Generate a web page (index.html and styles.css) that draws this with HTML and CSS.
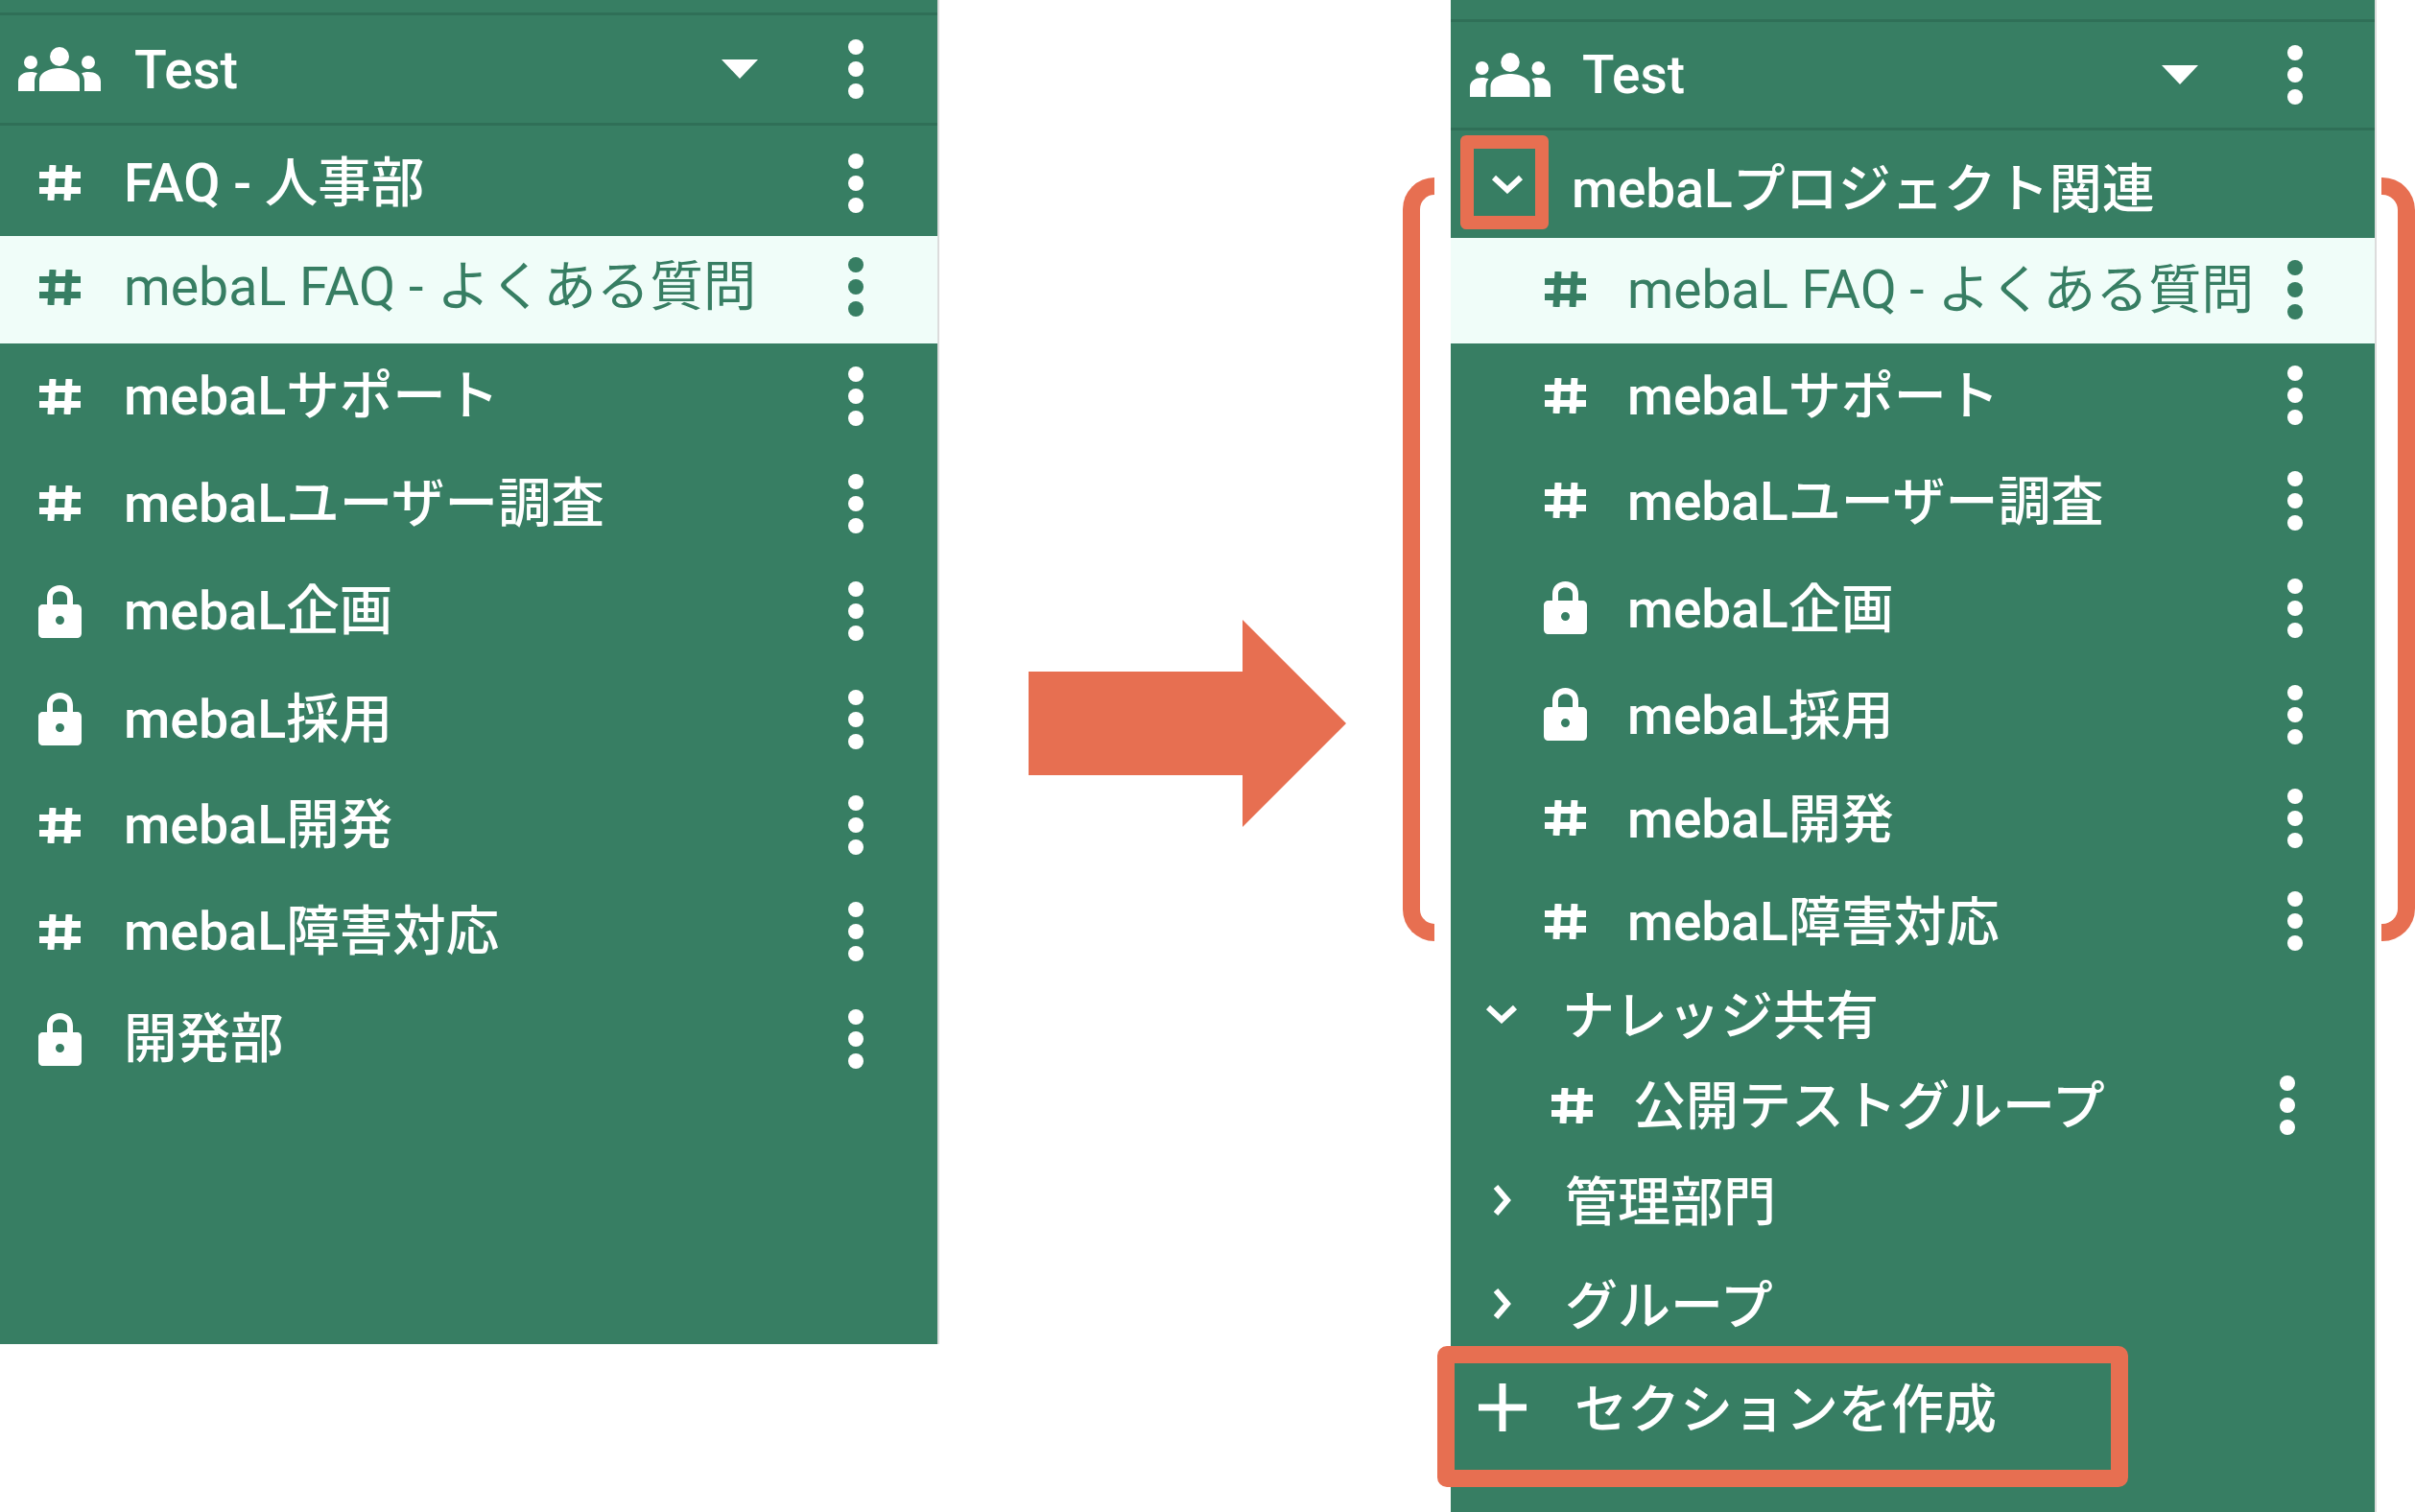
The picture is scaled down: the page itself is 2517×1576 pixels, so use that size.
FILE: index.html
```html
<!DOCTYPE html>
<html lang="ja">
<head>
<meta charset="utf-8">
<title>mebaL sections</title>
<link rel="stylesheet" href="styles.css">
</head>
<body>
<svg class="sprite" aria-hidden="true">
  <symbol id="hash" viewBox="0 0 45 37"><path d="M15 0 13 37M32 0 30 37M1 10.500H44M1 26.500H44" fill="none" stroke="currentColor" stroke-width="7"/></symbol>
  <symbol id="lock" viewBox="0 0 45 55" preserveAspectRatio="none"><path fill="currentColor" fill-rule="evenodd" d="M9 20V13C9 5 15 0 22.500 0S36 5 36 13V20H40C43 20 45 22 45 25V50C45 53 43 55 40 55H5C2 55 0 53 0 50V25C0 22 2 20 5 20zM15 20H30V13C30 9 27 6.500 22.500 6.500S15 9 15 13zM22.500 32A4.500 4.500 0 1 0 22.500 41 4.500 4.500 0 1 0 22.500 32z"/></symbol>
  <symbol id="kebab" viewBox="0 0 18 62"><ellipse cx="9" cy="8" rx="8" ry="8" fill="currentColor"/><ellipse cx="9" cy="31" rx="8" ry="8" fill="currentColor"/><ellipse cx="9" cy="54" rx="8" ry="8" fill="currentColor"/></symbol>
  <symbol id="group" viewBox="0 0 86 46" preserveAspectRatio="none"><g fill="currentColor"><circle cx="43" cy="10" r="10"/><path d="M22 46V35c0-9 11-13 21-13s21 4 21 13v11z"/><circle cx="13" cy="16" r="7"/><circle cx="73" cy="16" r="7"/><path d="M0 46V36c0-7 6-10 13-10 3 0 5 .5 7 1.500-2 2-3 5-3 8v10.500zM86 46V36c0-7-6-10-13-10-3 0-5 .5-7 1.500 2 2 3 5 3 8v10.500z"/></g></symbol>
  <symbol id="caret" viewBox="0 0 38 20" preserveAspectRatio="none"><path fill="currentColor" d="M0 0H38L19 20z"/></symbol>
  <symbol id="down" viewBox="0 0 34 20" preserveAspectRatio="none"><path d="M3 3 17 16 31 3" fill="none" stroke="currentColor" stroke-width="6"/></symbol>
  <symbol id="right" viewBox="0 0 20 34" preserveAspectRatio="none"><path d="M4 3 16 17 4 31" fill="none" stroke="currentColor" stroke-width="6"/></symbol>
  <symbol id="plus" viewBox="0 0 50 50"><path d="M25 0V50M0 25H50" fill="none" stroke="currentColor" stroke-width="7"/></symbol>
</svg>

<main class="canvas">
  <section class="panel panel-before">
    <header class="workspace">
      <svg class="ico-group"><use href="#group"/></svg>
      <span class="ws-name">Test</span>
      <svg class="ico-caret"><use href="#caret"/></svg>
      <svg class="ico-kebab"><use href="#kebab"/></svg>
    </header>
    <ul class="channels">
      <li class="channel"><svg class="ico"><use href="#hash"/></svg><span class="label">FAQ - 人事部</span><svg class="ico-kebab"><use href="#kebab"/></svg></li>
      <li class="channel active"><svg class="ico"><use href="#hash"/></svg><span class="label">mebaL FAQ - よくある質問</span><svg class="ico-kebab"><use href="#kebab"/></svg></li>
      <li class="channel"><svg class="ico"><use href="#hash"/></svg><span class="label">mebaLサポート</span><svg class="ico-kebab"><use href="#kebab"/></svg></li>
      <li class="channel"><svg class="ico"><use href="#hash"/></svg><span class="label">mebaLユーザー調査</span><svg class="ico-kebab"><use href="#kebab"/></svg></li>
      <li class="channel"><svg class="ico ico-lock"><use href="#lock"/></svg><span class="label">mebaL企画</span><svg class="ico-kebab"><use href="#kebab"/></svg></li>
      <li class="channel"><svg class="ico ico-lock"><use href="#lock"/></svg><span class="label">mebaL採用</span><svg class="ico-kebab"><use href="#kebab"/></svg></li>
      <li class="channel"><svg class="ico"><use href="#hash"/></svg><span class="label">mebaL開発</span><svg class="ico-kebab"><use href="#kebab"/></svg></li>
      <li class="channel"><svg class="ico"><use href="#hash"/></svg><span class="label">mebaL障害対応</span><svg class="ico-kebab"><use href="#kebab"/></svg></li>
      <li class="channel"><svg class="ico ico-lock"><use href="#lock"/></svg><span class="label">開発部</span><svg class="ico-kebab"><use href="#kebab"/></svg></li>
    </ul>
  </section>

  <svg class="arrow" viewBox="0 0 331 216" aria-hidden="true"><path d="M0 54H223V0L331 108 223 216V162H0z"/></svg>

  <section class="panel panel-after">
    <header class="workspace">
      <svg class="ico-group"><use href="#group"/></svg>
      <span class="ws-name">Test</span>
      <svg class="ico-caret"><use href="#caret"/></svg>
      <svg class="ico-kebab"><use href="#kebab"/></svg>
    </header>
    <ul class="channels">
      <li class="section first"><svg class="ico-down"><use href="#down"/></svg><span class="label">mebaLプロジェクト関連</span></li>
      <li class="channel active"><svg class="ico"><use href="#hash"/></svg><span class="label">mebaL FAQ - よくある質問</span><svg class="ico-kebab"><use href="#kebab"/></svg></li>
      <li class="channel"><svg class="ico"><use href="#hash"/></svg><span class="label">mebaLサポート</span><svg class="ico-kebab"><use href="#kebab"/></svg></li>
      <li class="channel"><svg class="ico"><use href="#hash"/></svg><span class="label">mebaLユーザー調査</span><svg class="ico-kebab"><use href="#kebab"/></svg></li>
      <li class="channel"><svg class="ico ico-lock"><use href="#lock"/></svg><span class="label">mebaL企画</span><svg class="ico-kebab"><use href="#kebab"/></svg></li>
      <li class="channel"><svg class="ico ico-lock"><use href="#lock"/></svg><span class="label">mebaL採用</span><svg class="ico-kebab"><use href="#kebab"/></svg></li>
      <li class="channel"><svg class="ico"><use href="#hash"/></svg><span class="label">mebaL開発</span><svg class="ico-kebab"><use href="#kebab"/></svg></li>
      <li class="channel"><svg class="ico"><use href="#hash"/></svg><span class="label">mebaL障害対応</span><svg class="ico-kebab"><use href="#kebab"/></svg></li>
      <li class="section"><svg class="ico-down"><use href="#down"/></svg><span class="label">ナレッジ共有</span></li>
      <li class="channel public"><svg class="ico"><use href="#hash"/></svg><span class="label">公開テストグループ</span><svg class="ico-kebab"><use href="#kebab"/></svg></li>
      <li class="section"><svg class="ico-right"><use href="#right"/></svg><span class="label">管理部門</span></li>
      <li class="section"><svg class="ico-right"><use href="#right"/></svg><span class="label">グループ</span></li>
      <li class="section create"><svg class="ico-plus"><use href="#plus"/></svg><span class="label">セクションを作成</span></li>
    </ul>
    <div class="mark mark-chevron"></div>
    <div class="mark bracket-left"></div>
    <div class="mark bracket-right"></div>
    <div class="mark mark-create"></div>
  </section>
</main>
</body>
</html>
```

FILE: styles.css
```css
* { box-sizing: border-box; }

html, body {
  margin: 0;
  padding: 0;
  background: #fff;
}

body {
  width: 2517px;
  height: 1576px;
  overflow: hidden;
  font-family: Roboto, "Noto Sans CJK JP", sans-serif;
  font-size: 55.5px;
  font-weight: 500;
  color: #fff;
}

.sprite { display: none; }

.canvas {
  display: flex;
  align-items: flex-start;
}

.panel {
  flex: none;
  background: #377e63;
  border-right: 2px solid #dcdcdc;
}

.panel-before {
  width: 979px;
  height: 1401px;
  padding-top: 13px;
}

.panel-after {
  position: relative;
  width: 965px;
  height: 1576px;
  margin-left: 109px;
  padding-top: 20px;
  font-size: 55px;
}

.arrow {
  flex: none;
  width: 331px;
  height: 216px;
  margin: 646px 0 0 93px;
  fill: #e76f51;
}

.workspace {
  display: flex;
  align-items: center;
  height: 118px;
  border-top: 3px solid #2f6f57;
  border-bottom: 3px solid #2f6f57;
}

.ico-group { flex: none; width: 86px; height: 46px; margin-left: 19px; }
.ws-name { margin-left: 35px; margin-top: 2px; }
.ico-caret { flex: none; width: 38px; height: 20px; margin-left: auto; margin-right: 93px; }

.ico-kebab {
  flex: none;
  width: 18px;
  height: 62px;
  margin-right: 76px;
}

.channels {
  margin: 0;
  padding: 0;
  list-style: none;
}

.channel, .section {
  display: flex;
  align-items: center;
}

.channel .ico-kebab { margin-left: auto; }

.ico { flex: none; width: 45px; height: 37px; margin-left: 40px; }
.ico-lock { height: 55px; }
.label { margin-left: 44px; margin-bottom: 10px; white-space: nowrap; }

.active {
  background: #f0fdf9;
  color: #377e63;
}

.active .label { font-weight: 400; }
.panel-before .active .label { margin-bottom: 16px; }
.panel-before .active svg { margin-bottom: 6px; }

/* Before panel row heights */
.panel-before .channel:nth-child(1) { height: 115px; padding-top: 4px; }
.panel-before .channel:nth-child(2) { height: 112px; }
.panel-before .channel:nth-child(3) { height: 110px; }
.panel-before .channel:nth-child(4) { height: 113px; }
.panel-before .channel:nth-child(5) { height: 112px; }
.panel-before .channel:nth-child(6) { height: 113px; }
.panel-before .channel:nth-child(7) { height: 108px; }
.panel-before .channel:nth-child(8) { height: 114px; }
.panel-before .channel:nth-child(9) { height: 110px; }

/* After panel */
.panel-after .workspace { height: 116px; }
.panel-after .ico-group { width: 84px; margin-left: 20px; }
.panel-after .ws-name { margin-left: 33px; margin-top: 0; }
.panel-after .ico-caret { margin-right: 92px; }
.panel-after .ico-kebab { margin-right: 74px; }
.panel-after .label { margin-bottom: 6px; }

.panel-after .channel .ico { margin-left: 97px; }
.panel-after .channel .label { margin-left: 42px; margin-bottom: 8px; }
.panel-after .channel.active .label { margin-bottom: 12px; }
.panel-after .channel.active svg { margin-bottom: 3px; }

.panel-after .channels > :nth-child(1) { height: 112px; }
.panel-after .channels > :nth-child(2) { height: 110px; }
.panel-after .channels > :nth-child(3) { height: 108px; }
.panel-after .channels > :nth-child(4) { height: 111px; }
.panel-after .channels > :nth-child(5) { height: 113px; }
.panel-after .channels > :nth-child(6) { height: 109px; }
.panel-after .channels > :nth-child(7) { height: 107px; }
.panel-after .channels > :nth-child(8) { height: 108px; }
.panel-after .channels > :nth-child(9) { height: 86px; }
.panel-after .channels > :nth-child(10) { height: 104px; }
.panel-after .channels > :nth-child(11) { height: 94px; }
.panel-after .channels > :nth-child(12) { height: 122px; }
.panel-after .channels > :nth-child(13) { height: 94px; }

.panel-after .channel.public .ico { margin-left: 104px; }
.panel-after .channel.public .label { margin-left: 41px; }
.panel-after .channel.public .ico-kebab { margin-right: 82px; }

.ico-down { flex: none; width: 34px; height: 20px; margin-left: 36px; }
.ico-right { flex: none; width: 20px; height: 34px; margin-left: 43px; }
.ico-plus { flex: none; width: 50px; height: 50px; margin-left: 29px; }

.section .label { margin-left: 46px; }
.section .ico-right + .label { margin-left: 56px; }
.section.first .ico-down { margin-left: 42px; }
.section.first .label { margin-left: 50px; margin-bottom: 0; }
.section.create .label { margin-left: 50px; }

/* Orange annotations laid over the panel */
.mark {
  position: absolute;
  border: 0 solid #e76f51;
}

.mark-chevron {
  left: 10px;
  top: 141px;
  width: 92px;
  height: 98px;
  border-width: 14px;
  border-radius: 6px;
}

.bracket-left {
  left: -50px;
  top: 185px;
  width: 33px;
  height: 796px;
  border-width: 18px 0 18px 18px;
  border-radius: 34px 0 0 34px;
}

.bracket-right {
  left: 970px;
  top: 185px;
  width: 35px;
  height: 796px;
  border-width: 18px 18px 18px 0;
  border-radius: 0 34px 34px 0;
}

.mark-create {
  left: -14px;
  top: 1403px;
  width: 720px;
  height: 147px;
  border-width: 18px;
  border-radius: 10px;
}
```
